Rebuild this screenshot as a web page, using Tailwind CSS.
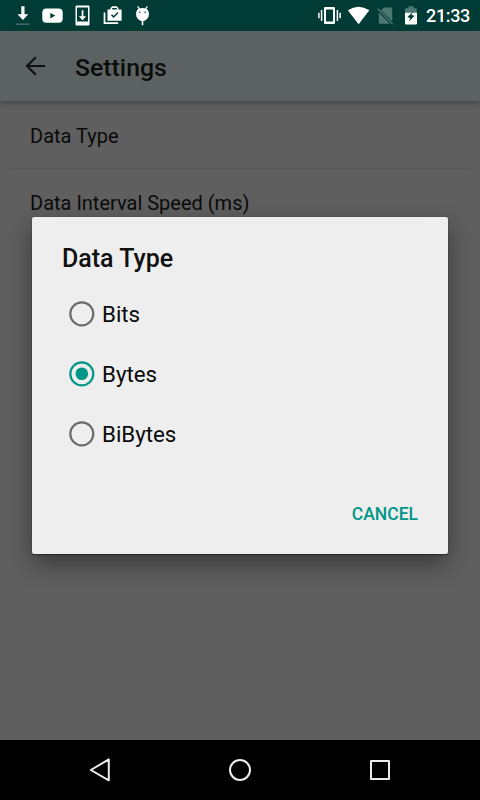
<!DOCTYPE html>
<html lang="en">
<head>
<meta charset="utf-8">
<title>Settings</title>
<script src="https://cdn.jsdelivr.net/npm/@tailwindcss/browser@4"></script>
</head>
<body class="w-[480px] h-[800px] overflow-hidden bg-[#5f5f5f] font-['Roboto',sans-serif]">
<div class="relative flex h-[800px] w-[480px] flex-col">
  <header class="flex h-[31px] items-start justify-between border-b border-[#00443c] bg-[#003c35] pl-2">
    <div class="flex">
      <svg class="h-[30px] w-[30px]" viewBox="8 0 30 30"><path fill="#fff" d="M21.300 6.300h3.200v8h3.800L22.900 20l-5.400-5.700h3.800z"/><path fill="#4d7771" d="M16 23.500h13.500v1.300H16z"/></svg>
      <svg class="h-[30px] w-[30px]" viewBox="38 0 30 30"><rect x="42.300" y="8.500" width="20.400" height="14.300" rx="4" fill="#fff"/><path fill="#003c35" d="M50.300 12.900l5 2.700-5 2.800z"/></svg>
      <svg class="h-[30px] w-[30px]" viewBox="68 0 30 30"><path fill="#fff" fill-rule="evenodd" d="M76.500 5.500h12a1 1 0 0 1 1 1v18a1 1 0 0 1-1 1h-12a1 1 0 0 1-1-1v-18a1 1 0 0 1 1-1zM77 7.600v13.800h11V7.600z"/><path fill="#fff" d="M81.700 10.300h1.700v6h2.800l-3.700 4-3.700-4h2.900z"/></svg>
      <svg class="h-[30px] w-[30px]" viewBox="98 0 30 30"><path fill="#fff" fill-rule="evenodd" d="M107.500 9.500h3V8l1.700-1.700h4.500L118.400 8v1.500h3.200v11.300h-14.100zM112.200 9.500h4.600V7.900h-4.600z"/><path d="M111.500 14.700l2.200 2.200 4.300-4.500" fill="none" stroke="#003c35" stroke-width="1.500"/><path d="M104.500 12.500v10.700h13.700" fill="none" stroke="#fff" stroke-width="1.700"/></svg>
      <svg class="h-[30px] w-[30px]" viewBox="128 0 30 30"><path fill="#fff" d="M136 14q0-6 6.500-6t6.500 6q0 3-2 5t-3.700 2v4.300h-1.600V21q-1.700 0-3.700-2t-2-5z"/><path d="M137.600 6.300l2.200 3M147.400 6.300l-2.200 3" stroke="#fff" stroke-width="1.300"/><circle cx="139.800" cy="12.300" r=".8" fill="#003c35"/><circle cx="145.200" cy="12.300" r=".8" fill="#003c35"/></svg>
    </div>
    <div class="flex">
      <svg class="h-[30px] w-[30px]" viewBox="315 0 30 30"><path fill="#fff" fill-rule="evenodd" d="M325 7h9a1 1 0 0 1 1 1v15a1 1 0 0 1-1 1h-9a1 1 0 0 1-1-1V8a1 1 0 0 1 1-1zM326 9.500v12h7v-12z"/><path d="M321.600 10v11M318.900 12.700v5.600M337.400 10v11M340.100 12.700v5.600" stroke="#fff" stroke-width="1.500"/></svg>
      <svg class="h-[30px] w-[28px]" viewBox="345 0 28 30"><path fill="#fff" d="M347.800 10.300Q358.500 3 369.300 10.300L358.600 24.300z"/></svg>
      <svg class="h-[30px] w-[27px]" viewBox="373 0 27 30"><path fill="#4d7771" d="M384 7.500h7.200a1 1 0 0 1 1 1v12.700L381.100 10.200zM378.800 12.500L389.800 23.800h-10a1 1 0 0 1-1-1z"/><path d="M377.800 8.800l15 15.500" stroke="#4d7771" stroke-width="1.400"/></svg>
      <svg class="h-[30px] w-[26px]" viewBox="400 0 26 30"><path fill="#4d7771" d="M408.500 6.300h5v2h3.200v6H405v-6h3.500z"/><path fill="#fff" d="M405 12.800h12v10.700a1 1 0 0 1-1 1h-10a1 1 0 0 1-1-1z"/><path fill="#003c35" d="M413.500 11.300L407.300 17.300l3 .6-1.600 3.800 5.900-6-3.200-.7z"/></svg>
      <span class="w-[54px] pt-[6px] text-[18px] leading-[20px] font-medium tracking-[-0.350px] text-white">21:33</span>
    </div>
  </header>
  <div class="flex h-[70px] shrink-0 items-center bg-[#5c6261] pl-[25px] shadow-[0_2px_6px_rgba(0,0,0,0.3)]">
    <svg class="h-[20px] w-[21px]" viewBox="0 0 21 20" fill="none" stroke="#101211" stroke-width="2.200"><path d="M20 10H2.500M10.800 1.200L2 10l8.800 8.800"/></svg>
    <h1 class="ml-[29px] pt-[3px] text-[24.800px] leading-[30px] font-medium text-[#0b0c0c]">Settings</h1>
  </div>
  <main class="flex-1 px-[10px]">
    <div class="flex h-[68px] items-center border-b border-[#555] pt-[2px] pl-5 text-[20px] text-[#0b0b0b]">Data Type</div>
    <div class="flex h-[68px] items-center border-b border-[#585858] pl-5 text-[20px] text-[#0b0b0b]">Data Interval Speed (ms)</div>
  </main>
  <nav class="flex h-[60px] items-center justify-center gap-[110px] bg-black">
    <svg class="h-[30px] w-[30px]" viewBox="0 0 30 30" fill="none" stroke="#ececec" stroke-width="2" stroke-linejoin="round"><path d="M23.800 4.400v20.900L5.800 15z"/></svg>
    <svg class="h-[30px] w-[30px]" viewBox="0 0 30 30" fill="none" stroke="#ececec" stroke-width="2"><circle cx="15" cy="15" r="10"/></svg>
    <svg class="h-[30px] w-[30px]" viewBox="0 0 30 30" fill="none" stroke="#ececec" stroke-width="2" stroke-linejoin="round"><path d="M6 6h18v18H6z"/></svg>
  </nav>
  <section role="dialog" class="absolute top-[217px] left-[32px] flex h-[337px] w-[416px] flex-col rounded-[2px] bg-[#eee] px-[30px] shadow-[0_0_1px_rgba(0,0,0,0.5),0_1px_1px_rgba(0,0,0,0.4),0_10px_24px_rgba(0,0,0,0.4)]">
    <h2 class="mt-[27px] text-[25px] leading-[30px] font-medium text-[#111]">Data Type</h2>
    <div class="mt-[10px] flex flex-col pl-[6px] text-[22.300px] text-[#0a0a0a]">
      <label class="flex h-[60px] items-center gap-[6px]"><svg class="h-[28px] w-[28px]" viewBox="0 0 28 28" fill="none"><circle cx="13.800" cy="13.800" r="11.500" stroke="#6b6b6b" stroke-width="2.200"/></svg><span class="pt-[2px]">Bits</span></label>
      <label class="flex h-[60px] items-center gap-[6px]"><svg class="h-[28px] w-[28px]" viewBox="0 0 28 28" fill="none"><circle cx="13.800" cy="13.800" r="11.500" stroke="#009688" stroke-width="2.200"/><circle cx="13.800" cy="13.800" r="6.300" fill="#009688"/></svg><span class="pt-[2px]">Bytes</span></label>
      <label class="flex h-[60px] items-center gap-[6px]"><svg class="h-[28px] w-[28px]" viewBox="0 0 28 28" fill="none"><circle cx="13.800" cy="13.800" r="11.500" stroke="#6b6b6b" stroke-width="2.200"/></svg><span class="pt-[2px]">BiBytes</span></label>
    </div>
    <button class="mt-auto mb-[30px] self-end text-[17.500px] leading-[20px] font-medium text-[#009688]">CANCEL</button>
  </section>
</div>
</body>
</html>
